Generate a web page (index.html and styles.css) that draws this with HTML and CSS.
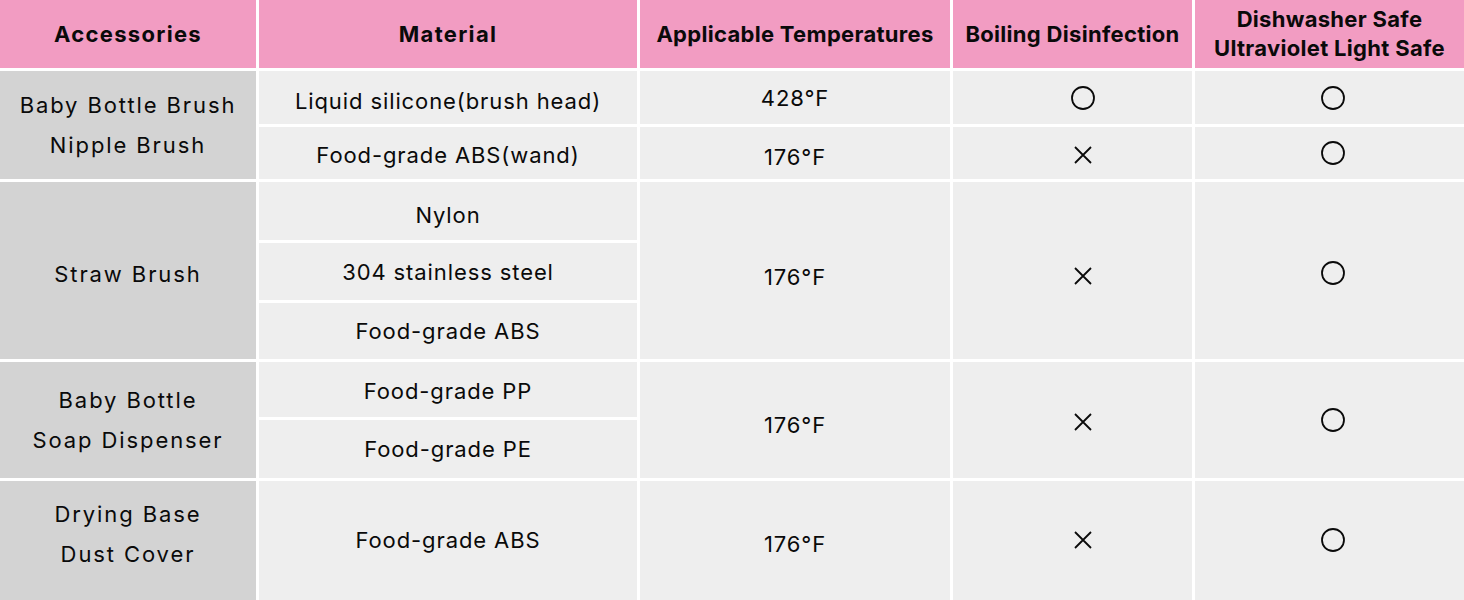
FILE: index.html
```html
<!DOCTYPE html>
<html lang="en">
<head>
<meta charset="utf-8">
<title>Accessories materials</title>
<link rel="stylesheet" href="styles.css">
</head>
<body>
<div class="spec">
  <div class="cell head wide">Accessories</div>
  <div class="cell head wide">Material</div>
  <div class="cell head">Applicable Temperatures</div>
  <div class="cell head">Boiling Disinfection</div>
  <div class="cell head">Dishwasher Safe<br>Ultraviolet Light Safe</div>

  <div class="cell acc span2">Baby Bottle Brush<br>Nipple Brush</div>
  <div class="cell down7">Liquid silicone(brush head)</div>
  <div class="cell">428°F</div>
  <div class="cell mark boil"><svg class="o" viewBox="0 0 24 24"><circle cx="12" cy="12" r="11"/></svg></div>
  <div class="cell mark dish"><svg class="o" viewBox="0 0 24 24"><circle cx="12" cy="12" r="11"/></svg></div>
  <div class="cell down3">Food-grade ABS(wand)</div>
  <div class="cell down8">176°F</div>
  <div class="cell mark boil down4"><svg class="x" viewBox="0 0 18 18"><path d="M1 1L17 17M17 1L1 17"/></svg></div>
  <div class="cell mark dish"><svg class="o" viewBox="0 0 24 24"><circle cx="12" cy="12" r="11"/></svg></div>

  <div class="cell acc span3 down7">Straw Brush</div>
  <div class="cell down7">Nylon</div>
  <div class="cell span3 down13">176°F</div>
  <div class="cell mark boil span3 down11"><svg class="x" viewBox="0 0 18 18"><path d="M1 1L17 17M17 1L1 17"/></svg></div>
  <div class="cell mark dish span3 down4"><svg class="o" viewBox="0 0 24 24"><circle cx="12" cy="12" r="11"/></svg></div>
  <div class="cell">304 stainless steel</div>
  <div class="cell">Food-grade ABS</div>

  <div class="cell acc span2">Baby Bottle<br>Soap Dispenser</div>
  <div class="cell down3">Food-grade PP</div>
  <div class="cell span2 down9">176°F</div>
  <div class="cell mark boil span2 down4"><svg class="x" viewBox="0 0 18 18"><path d="M1 1L17 17M17 1L1 17"/></svg></div>
  <div class="cell mark dish span2"><svg class="o" viewBox="0 0 24 24"><circle cx="12" cy="12" r="11"/></svg></div>
  <div class="cell">Food-grade PE</div>

  <div class="cell acc up16">Drying Base<br>Dust Cover</div>
  <div class="cell up">Food-grade ABS</div>
  <div class="cell down3">176°F</div>
  <div class="cell mark boil up"><svg class="x" viewBox="0 0 18 18"><path d="M1 1L17 17M17 1L1 17"/></svg></div>
  <div class="cell mark dish up"><svg class="o" viewBox="0 0 24 24"><circle cx="12" cy="12" r="11"/></svg></div>
</div>
</body>
</html>
```

FILE: styles.css
```css
html, body {
  margin: 0;
  padding: 0;
  background: #ffffff;
}

body {
  font-family: Inter, "Noto Sans", "Liberation Sans", sans-serif;
  color: #0a0a0a;
  overflow: hidden;
}

.spec {
  display: grid;
  grid-template-columns: 256px 378px 310px 239px 269px;
  grid-template-rows: 68px 53px 52px 58px 57px 56px 55px 58px 122px;
  gap: 3px;
  width: 1464px;
}

.cell {
  background: #eeeeee;
  display: flex;
  align-items: center;
  justify-content: center;
  text-align: center;
  font-size: 22px;
  font-weight: 400;
  line-height: 26px;
  letter-spacing: 0.9px;
}

.head {
  background: #f29cc2;
  font-weight: 700;
  font-size: 22px;
  line-height: 29px;
  letter-spacing: 0.3px;
  color: #0a0a0a;
}

.head.wide {
  letter-spacing: 1.3px;
}

.acc {
  background: #d3d3d3;
  line-height: 40px;
  letter-spacing: 1.9px;
}

.span2 { grid-row: span 2; }
.span3 { grid-row: span 3; }

.down3 { padding-top: 3px; }
.down4 { padding-top: 4px; }
.down7 { padding-top: 7px; }
.down8 { padding-top: 8px; }
.down9 { padding-top: 9px; }
.down11 { padding-top: 11px; }
.down13 { padding-top: 13px; }
.up { padding-bottom: 4px; }
.up16 { padding-bottom: 16px; }

.mark svg {
  fill: none;
  stroke: #0a0a0a;
  stroke-width: 1.8;
}

.mark .o { width: 24px; height: 24px; }
.mark .x { width: 18px; height: 18px; }

.boil { padding-left: 21px; }
.dish { padding-left: 7px; }
```
